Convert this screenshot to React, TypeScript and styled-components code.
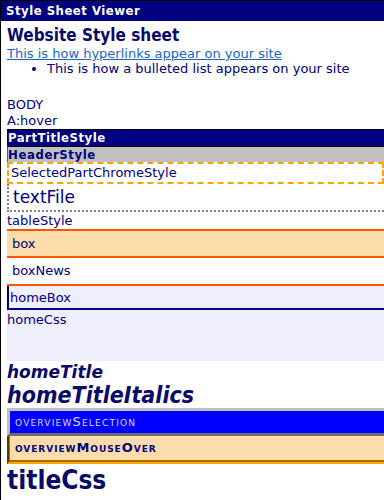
import React from "react";
import styled, { createGlobalStyle } from "styled-components";

const Global = createGlobalStyle`
  html, body { margin: 0; padding: 0; background: #fff; overflow: hidden; }
  body { font-family: "DejaVu Sans", Verdana, sans-serif; }
`;

const Frame = styled.div`
  border-left: 1px solid #000;
  border-top: 1px solid #000;
  height: 499px;
  overflow: hidden;
`;

const TitleBar = styled.div`
  background: #000080;
  color: #fff;
  font-weight: bold;
  font-size: 13px;
  font-stretch: condensed;
  letter-spacing: 0.5px;
  height: 20px;
  line-height: 20px;
  padding-left: 5px;
  white-space: nowrap;
`;

const Content = styled.div`
  padding-left: 6px;
  color: #000080;
  font-size: 13px;
`;

const Heading = styled.div`
  font-size: 17px;
  font-stretch: condensed;
  font-weight: bold;
  line-height: 22px;
  margin-top: 3px;
  color: #0a0a6a;
`;

const Link = styled.a`
  display: block;
  color: #1a66c8;
  text-decoration: underline;
  line-height: 15px;
  font-size: 13px;
`;

const List = styled.ul`
  margin: 0;
  padding-left: 40px;
  line-height: 16px;
  list-style: disc;
  white-space: nowrap;
`;

const Plain = styled.div<{ $top?: number; $lh?: number }>`
  line-height: ${(p) => p.$lh ?? 16}px;
  margin-top: ${(p) => p.$top ?? 0}px;
  white-space: nowrap;
`;

const PartTitle = styled.div`
  background: #000080;
  color: #fff;
  font-weight: bold;
  font-stretch: condensed;
  letter-spacing: 0.5px;
  border-top: 1px solid #000;
  height: 16px;
  line-height: 16px;
  padding-left: 1px;
`;

const HeaderRow = styled.div`
  background: #c0c0c0;
  color: #000080;
  font-weight: bold;
  font-stretch: condensed;
  letter-spacing: 0.6px;
  border-top: 1px solid #000;
  border-left: 1px solid #555;
  height: 15px;
  line-height: 15px;
`;

const Selected = styled.div`
  border: 2px dashed #ffa500;
  height: 18px;
  line-height: 18px;
  padding-left: 2px;
  white-space: nowrap;
`;

const TextFile = styled.div`
  border-left: 2px dotted #808080;
  border-bottom: 2px dotted #808080;
  font-size: 17px;
  height: 26px;
  line-height: 26px;
  padding-left: 4px;
`;

const Box = styled.div<{ $fill?: boolean }>`
  background: ${(p) => (p.$fill ? "#fddcab" : "#fff")};
  border-top: ${(p) => (p.$fill ? "2px solid #ff5500" : "none")};
  border-bottom: 2px solid #ff5500;
  height: ${(p) => (p.$fill ? 25 : 26)}px;
  line-height: ${(p) => (p.$fill ? 25 : 26)}px;
  padding-left: 5px;
`;

const HomeBox = styled.div`
  background: #eeeefc;
  border-left: 2px solid #000080;
  border-bottom: 2px solid #000080;
  height: 22px;
  line-height: 24px;
  padding-left: 1px;
`;

const HomeCss = styled.div`
  background: #eeeefc;
  height: 51px;
  line-height: 20px;
`;

const HomeTitle = styled.div<{ $size: number; $lh: number; $condensed?: boolean }>`
  font-size: ${(p) => p.$size}px;
  line-height: ${(p) => p.$lh}px;
  font-stretch: ${(p) => (p.$condensed ? "condensed" : "normal")};
  font-weight: bold;
  font-style: italic;
  color: #0a0a6a;
  white-space: nowrap;
`;

const OverviewSelection = styled.div`
  background: #0000ff;
  color: #d8d8ff;
  border: 3px outset #c0c0c0;
  border-right: none;
  font-variant: small-caps;
  font-size: 13px;
  letter-spacing: 1.2px;
  height: 22px;
  line-height: 22px;
  padding-left: 5px;
  white-space: nowrap;
`;

const OverviewMouseOver = styled.div`
  background: #fddcab;
  color: #000080;
  font-weight: bold;
  border-left: 3px groove #b07000;
  border-bottom: 4px groove #ffa500;
  font-variant: small-caps;
  font-size: 13px;
  letter-spacing: 0.95px;
  height: 24px;
  line-height: 24px;
  padding-left: 5px;
  white-space: nowrap;
`;

const TitleCss = styled.div`
  font-size: 26px;
  font-stretch: condensed;
  font-weight: bold;
  line-height: 32px;
  color: #0a0a6a;
`;

export default function App() {
  return (
    <>
      <Global />
      <Frame>
        <TitleBar>Style Sheet Viewer</TitleBar>
        <Content>
          <Heading>Website Style sheet</Heading>
          <Link href="#">This is how hyperlinks appear on your site</Link>
          <List>
            <li>This is how a bulleted list appears on your site</li>
          </List>
          <Plain $top={20}>BODY</Plain>
          <Plain>A:hover</Plain>
          <PartTitle>PartTitleStyle</PartTitle>
          <HeaderRow>HeaderStyle</HeaderRow>
          <Selected>SelectedPartChromeStyle</Selected>
          <TextFile>textFile</TextFile>
          <Plain $lh={17}>tableStyle</Plain>
          <Box $fill>box</Box>
          <Box>boxNews</Box>
          <HomeBox>homeBox</HomeBox>
          <HomeCss>homeCss</HomeCss>
          <HomeTitle $size={17} $lh={22}>homeTitle</HomeTitle>
          <HomeTitle $size={23} $lh={25} $condensed>homeTitleItalics</HomeTitle>
          <OverviewSelection>overviewSelection</OverviewSelection>
          <OverviewMouseOver>overviewMouseOver</OverviewMouseOver>
          <TitleCss>titleCss</TitleCss>
        </Content>
      </Frame>
    </>
  );
}
